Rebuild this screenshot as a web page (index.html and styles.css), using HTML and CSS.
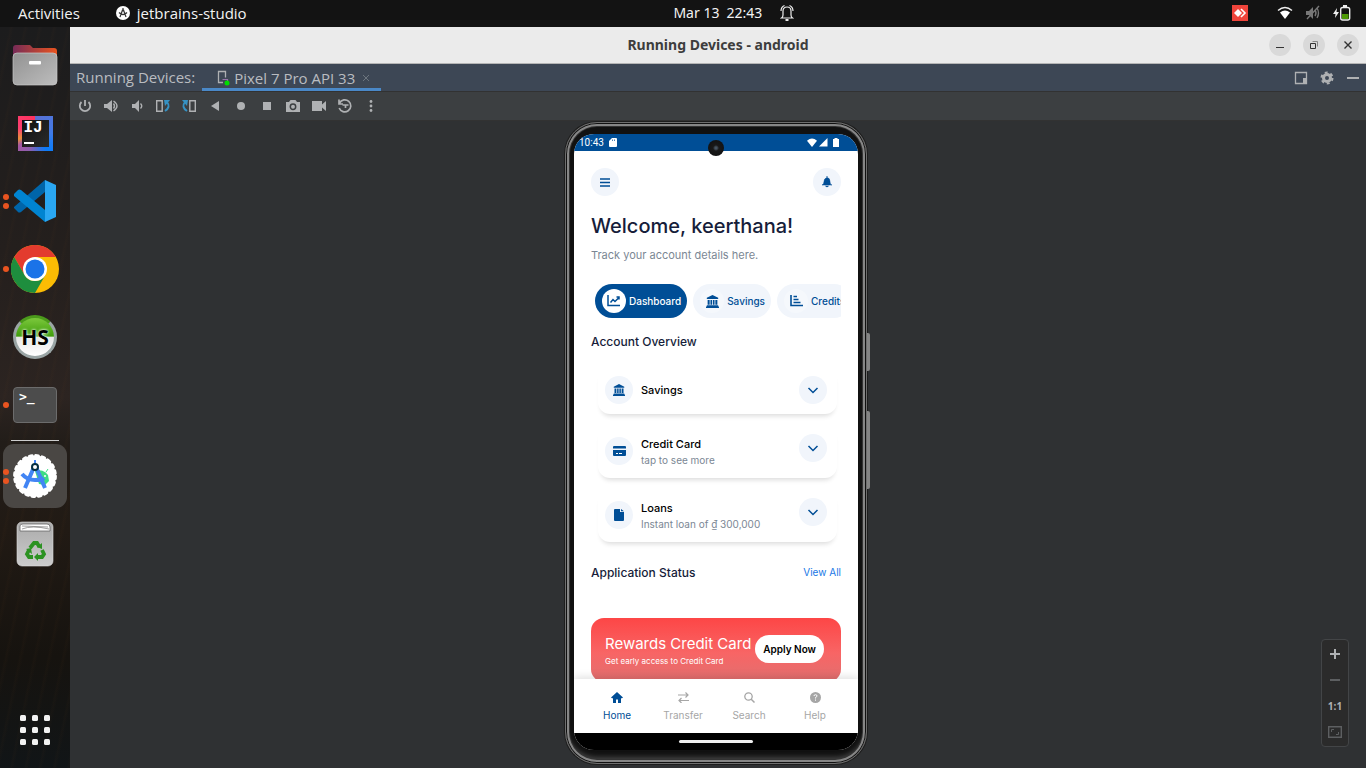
FILE: index.html
```html
<!DOCTYPE html>
<html lang="en">
<head>
<meta charset="utf-8">
<title>Running Devices - android</title>
<link rel="stylesheet" href="styles.css">
</head>
<body>
<svg class="defs" aria-hidden="true">
  <symbol id="studio" viewBox="0 0 44 44">
    <circle cx="22" cy="22" r="20.800" fill="#fff"/>
    <circle cx="22" cy="22" r="20.600" fill="none" stroke="#fff" stroke-width="2.600" stroke-linecap="round" stroke-dasharray="3 3.472"/>
    <path d="M22 17a10 9 0 0 1 13 4l1 6-4 4-6-1z" fill="#3ddc84"/>
    <circle cx="32" cy="22" r="1" fill="#fff"/><path d="M28 18l-2-2M33 18l2-3" stroke="#3ddc84"/>
    <path d="M21 13l-9 21M23 13l9 21" stroke="#4285f4" stroke-width="4"/>
    <path d="M9 20q5 6 13 6 7 0 9-2" fill="none" stroke="#4285f4" stroke-width="4"/>
    <path d="M22 6v5" stroke="#4285f4" stroke-width="2"/>
    <circle cx="22" cy="13" r="3" fill="#fff" stroke="#073042" stroke-width="2"/>
  </symbol>
  <symbol id="bank" viewBox="0 0 16 16"><path fill="currentColor" d="M8 0l7 3.500V5H1V3.500zM2 6h2.500v6H2zM5.500 6h2v6h-2zM8.500 6h2v6h-2zM11.500 6H14v6h-2.500zM1 12.500h14V14h1v2H0v-2h1z"/></symbol>
  <symbol id="chevron" viewBox="0 0 12 12"><path fill="none" stroke="currentColor" stroke-width="1.500" d="M1.500 4L6 8.500 10.500 4"/></symbol>
  <symbol id="wifi" viewBox="0 0 16 14"><path fill="currentColor" d="M8 14L0 4Q8-3 16 4z"/></symbol>
</svg>

<header class="topbar">
  <button class="top-item activities">Activities</button>
  <button class="top-item app-name">
    <svg width="14" height="14" viewBox="0 0 14 14" aria-hidden="true"><circle cx="7" cy="7" r="7" fill="#fff"/><path d="M7 2v2M6.500 4L4 11M7.500 4L10 11M3 6.500q4 4 8 0" fill="none" stroke="#333" stroke-width="1.200"/><circle cx="7" cy="4.500" r="1" fill="#333"/></svg>
    jetbrains-studio
  </button>
  <button class="top-item clock"><span>Mar 13</span><span>22:43</span>
    <svg width="14" height="18" viewBox="0 0 14 18" fill="none" stroke="#eee" stroke-width="1.200" aria-hidden="true"><path d="M1.500 14q1.500-1 1.500-3V7q0-4 4-4t4 4v4q0 2 1.500 3zM1 7q0-4 3.500-5.500M13 7q0-4-3.500-5.500"/><path d="M5.500 16h3" stroke-width="2"/></svg>
  </button>
  <div class="tray">
    <svg class="anydesk" width="16" height="16" viewBox="0 0 16 16" aria-hidden="true"><path fill="#ef443b" d="M0 0h16v16H0z"/><path fill="#fff" d="M2 8l4-4 4 4-4 4z"/><path d="M9 4l4 4-4 4" fill="none" stroke="#fff" stroke-width="1.600"/></svg>
    <svg class="net" width="16" height="14" viewBox="0 0 16 14" aria-hidden="true"><path d="M1 4.500Q8-1.500 15 4.500" fill="none" stroke="#eee" stroke-width="1.500"/><path d="M8 13L3 6.500q5-4 10 0z" fill="#fff"/></svg>
    <svg width="16" height="16" viewBox="0 0 16 16" aria-hidden="true"><path d="M1 6h3l4-4v12l-4-4H1z" fill="#777"/><path d="M10 5q2 3 0 6M12 3q3 5 0 10M2 14L14 1" fill="none" stroke="#777" stroke-width="1.400"/></svg>
    <svg class="battery" width="18" height="16" viewBox="0 0 18 16" aria-hidden="true"><path d="M4 3L0 9h2.500L2 13l4-6H3.500z" fill="#eee"/><rect x="7.700" y="2.500" width="9" height="12.500" rx="2" fill="none" stroke="#eee" stroke-width="1.400"/><path d="M10 0h4v2h-4z" fill="#eee"/><path d="M9 9h6.500v5H9z" fill="#4e9a06"/></svg>
  </div>
</header>

<div class="desktop">
  <nav class="dock" aria-label="Dock">
    <button class="slot" aria-label="Files">
      <svg width="46" height="42" viewBox="0 0 46 42"><defs><linearGradient id="fo"><stop stop-color="#762b57"/><stop offset="1" stop-color="#e95420"/></linearGradient><linearGradient id="fg" x2="1" y2="1"><stop stop-color="#929292"/><stop offset="1" stop-color="#bdbdbd"/></linearGradient></defs><path d="M1 16V4q0-3 3-3h14l3 3h21q3 0 3 3v9z" fill="url(#fo)"/><rect x="1" y="9" width="44" height="32" rx="4" fill="url(#fg)" stroke="#c8c8c8" stroke-width=".7"/><rect x="17" y="17" width="12" height="3.500" rx="1" fill="#fff"/></svg>
    </button>
    <button class="slot" aria-label="IntelliJ IDEA"><span class="idea"><span class="idea-face">IJ</span></span></button>
    <button class="slot two" aria-label="Visual Studio Code">
      <svg width="42" height="42" viewBox="0 0 42 42"><path d="M0 28l4 4q1 1 3 0L31 12V0L0 27z" fill="#0065a9"/><path d="M0 14l4-4q1-1 3 0l24 20v12L0 16z" fill="#0084d1"/><path d="M31 0l11 5v32l-11 5z" fill="#2aa7f2"/></svg>
    </button>
    <button class="slot one" aria-label="Chrome">
      <svg width="48" height="48" viewBox="0 0 48 48"><circle cx="24" cy="24" r="24" fill="#fbbc04"/><path d="M3.200 12A24 24 0 0 1 44.800 12H24L13.600 30z" fill="#e33b2e"/><path d="M3.200 12A24 24 0 0 0 24 48L34.400 30A12 12 0 0 1 13.600 30z" fill="#1e8e3e"/><circle cx="24" cy="24" r="12" fill="#fff"/><circle cx="24" cy="24" r="9.500" fill="#1a73e8"/></svg>
    </button>
    <button class="slot" aria-label="HeidiSQL"><span class="hs">HS</span></button>
    <button class="slot one" aria-label="Terminal"><span class="terminal">&gt;_</span></button>
    <hr class="dock-line">
    <button class="slot two active" aria-label="Android Studio"><svg width="44" height="44"><use href="#studio"/></svg></button>
    <button class="slot" aria-label="Trash">
      <svg width="38" height="46" viewBox="0 0 38 46"><defs><linearGradient id="tr" x2="0" y2="1"><stop stop-color="#aaa"/><stop offset="1" stop-color="#ccc"/></linearGradient></defs><rect x="1" y="1" width="36" height="44" rx="5" fill="url(#tr)" stroke="#ddd" stroke-width=".6"/><path d="M4 10V5q0-2 3-2h24q3 0 3 3v4z" fill="#fff" stroke="#666" stroke-width=".8"/><path d="M6 5l26 1M6 8q10-4 27 0" fill="none" stroke="#777" stroke-width=".7"/><g fill="none" stroke="#2c9222" stroke-width="3.800"><path d="M14 27l4-5h3l2.500 4"/><path d="M26 29l2 4-2 3h-5"/><path d="M17 36h-4l-2-3 2-4"/></g><path d="M26 22v6l-5-2zM22 32v8l-4-4zM10 28l5-1 1 6z" fill="#2c9222"/></svg>
    </button>
    <button class="slot apps" aria-label="Show Applications">
      <svg width="30" height="30" viewBox="0 0 30 30" fill="#f2f2f2"><rect width="6" height="6" rx="1.500"/><rect x="12" width="6" height="6" rx="1.500"/><rect x="24" width="6" height="6" rx="1.500"/><rect y="12" width="6" height="6" rx="1.500"/><rect x="12" y="12" width="6" height="6" rx="1.500"/><rect x="24" y="12" width="6" height="6" rx="1.500"/><rect y="24" width="6" height="6" rx="1.500"/><rect x="12" y="24" width="6" height="6" rx="1.500"/><rect x="24" y="24" width="6" height="6" rx="1.500"/></svg>
    </button>
  </nav>

  <main class="window">
    <div class="titlebar">
      <h1 class="window-title">Running Devices - android</h1>
      <div class="window-buttons">
        <button aria-label="Minimize"><svg width="10" height="10"><path d="M1 7.500h8" stroke="#333"/></svg></button>
        <button aria-label="Restore"><svg width="10" height="10" fill="none"><path d="M3.500 1.500h5v5" stroke="#888"/><path d="M1.500 3.500h5v5h-5z" stroke="#333"/></svg></button>
        <button aria-label="Close"><svg width="10" height="10"><path d="M1.500 1.500l7 7M8.500 1.500l-7 7" stroke="#333" stroke-width="1.400"/></svg></button>
      </div>
    </div>

    <div class="tabs">
      <span class="tabs-label">Running Devices:</span>
      <div class="tab">
        <svg width="14" height="16" viewBox="0 0 14 16" aria-hidden="true"><path d="M7 12.500H2.500v-11h7v6" fill="none" stroke="#afb1b3" stroke-width="1.300"/><path d="M6.500 9.500h5v3" fill="none" stroke="#9876aa" stroke-width="1.200"/><circle cx="11" cy="13" r="2.500" fill="#0d0"/></svg>
        <span>Pixel 7 Pro API 33</span>
        <button class="tab-close" aria-label="Close tab"><svg width="8" height="8"><path d="M1 1l6 6M7 1L1 7" stroke="#6c757e"/></svg></button>
      </div>
      <div class="tab-tools">
        <button aria-label="Window mode"><svg width="16" height="16"><path d="M2.500 2.500h11v11h-11z" fill="none" stroke="#afb1b3" stroke-width="1.300"/><path d="M10 8h4v6h-4z" fill="#afb1b3"/></svg></button>
        <button aria-label="Settings"><svg width="16" height="16"><circle cx="8" cy="8" r="3.500" fill="none" stroke="#afb1b3" stroke-width="3"/><circle cx="8" cy="8" r="5.500" fill="none" stroke="#afb1b3" stroke-width="2" stroke-dasharray="2.880 2.880"/></svg></button>
        <button aria-label="Hide"><svg width="16" height="16"><path d="M2 8h12" stroke="#afb1b3" stroke-width="2"/></svg></button>
      </div>
    </div>

    <div class="toolbar">
      <button aria-label="Power"><svg width="16" height="16"><path d="M4.500 4a5.200 5.200 0 1 0 7 0M8 2v6" fill="none" stroke="#afb1b3" stroke-width="1.800"/></svg></button>
      <button aria-label="Volume up"><svg width="16" height="16"><path d="M1 6h3l5-4v12l-5-4H1z" fill="#afb1b3"/><path d="M10.500 5.500q2 2.500 0 5M10.500 3q7 5 0 10" fill="none" stroke="#afb1b3" stroke-width="1.400"/></svg></button>
      <button aria-label="Volume down"><svg width="16" height="16"><path d="M3 6h3l4-4v12l-4-4H3z" fill="#afb1b3"/><path d="M11.500 5.500q2.500 2.500 0 5" fill="none" stroke="#afb1b3" stroke-width="1.400"/></svg></button>
      <button aria-label="Rotate left"><svg width="16" height="16"><path d="M1.700 2.700h5.500v10.500H1.700z" fill="none" stroke="#afb1b3" stroke-width="1.400"/><path d="M10 13q6-4 2-9" fill="none" stroke="#3592c4" stroke-width="2"/><path d="M9 2h6l-5 6z" fill="#3592c4"/></svg></button>
      <button aria-label="Rotate right"><svg width="16" height="16"><path d="M8.800 2.700h5.500v10.500H8.800z" fill="none" stroke="#afb1b3" stroke-width="1.400"/><path d="M6 13q-6-4-2-9" fill="none" stroke="#3592c4" stroke-width="2"/><path d="M7 2H1l5 6z" fill="#3592c4"/></svg></button>
      <button aria-label="Back"><svg width="16" height="16"><path d="M4 8l8-5v10z" fill="#afb1b3"/></svg></button>
      <button aria-label="Home"><svg width="16" height="16"><circle cx="8" cy="8" r="4" fill="#afb1b3"/></svg></button>
      <button aria-label="Overview"><svg width="16" height="16"><path d="M4 4h8v8H4z" fill="#afb1b3"/></svg></button>
      <button aria-label="Screenshot"><svg width="16" height="16"><path d="M1 4h3l1.500-2h5L12 4h3v10H1z" fill="#afb1b3"/><circle cx="8" cy="8.700" r="2.700" fill="#afb1b3" stroke="#3c3f41" stroke-width="1.500"/></svg></button>
      <button aria-label="Record"><svg width="16" height="16"><path d="M1 3h10v3.500L15 3v10l-4-3.500V13H1z" fill="#afb1b3"/></svg></button>
      <button aria-label="Snapshots"><svg width="16" height="16"><path d="M2.500 5a6 6 0 1 1-.3 5M2 1.500V6h4M5.500 7h6M8.500 7v3" fill="none" stroke="#afb1b3" stroke-width="1.700"/></svg></button>
      <button aria-label="More"><svg width="16" height="16" fill="#afb1b3"><circle cx="8" cy="3.500" r="1.400"/><circle cx="8" cy="8" r="1.400"/><circle cx="8" cy="12.500" r="1.400"/></svg></button>
    </div>

    <div class="stage">
      <div class="phone">
        <span class="side-key power"></span><span class="side-key volume"></span>
        <span class="camera"></span>
        <div class="screen">
          <div class="status">
            <span>10:43</span>
            <svg width="8" height="9" viewBox="0 0 8 9" aria-hidden="true"><path d="M3 0h4q1 0 1 1v7q0 1-1 1H1q-1 0-1-1V3z" fill="#fff"/><path d="M3.500 1.500V3M5.500 1.500V3" stroke="#004e96" stroke-width=".7"/></svg>
            <span class="status-right">
              <svg width="10" height="9"><use href="#wifi"/></svg>
              <svg width="9" height="9"><path d="M8.500 0v8.500H0z" fill="#fff"/></svg>
              <svg width="6" height="9"><path d="M0 1h1.500V0h3v1H6v8H0z" fill="#fff"/></svg>
            </span>
          </div>

          <div class="content">
            <div class="app-head">
              <button class="round" aria-label="Menu"><svg width="10" height="9"><path d="M0 1h10M0 4.500h10M0 8h10" stroke="currentColor" stroke-width="1.300"/></svg></button>
              <button class="round" aria-label="Notifications"><svg width="10" height="12"><path d="M5 0v1.500Q8 2 8 5.500T10 9H0Q2 8.500 2 5.500T5 1.500zM3.500 10h3q-1.500 2-3 0z" fill="currentColor" stroke="currentColor" stroke-width=".5"/></svg></button>
            </div>
            <h2 class="welcome">Welcome, keerthana!</h2>
            <p class="lead">Track your account details here.</p>

            <div class="chips">
              <button class="chip selected"><span class="chip-icon"><svg width="14" height="12"><path d="M1 0v10.500h12M3.500 7.500l2.500-3 2 2 4-4M9.500 2H12v2.500" fill="none" stroke="currentColor" stroke-width="1.500"/></svg></span>Dashboard</button>
              <button class="chip"><span class="chip-icon"><svg width="13" height="13"><use href="#bank"/></svg></span>Savings</button>
              <button class="chip"><span class="chip-icon"><svg width="13" height="12"><path d="M1 0v10.500h12M3.500 1.500h3.500M3.500 4.500h5M3.500 7.500h7" fill="none" stroke="currentColor" stroke-width="1.600"/></svg></span>Credits</button>
            </div>

            <h3 class="section">Account Overview</h3>
            <div class="cards">
              <article class="card">
                <span class="round"><svg width="12" height="12"><use href="#bank"/></svg></span>
                <div class="card-text"><h4>Savings</h4></div>
                <button class="round" aria-label="Expand Savings"><svg width="12" height="12"><use href="#chevron"/></svg></button>
              </article>
              <article class="card tall">
                <span class="round low"><svg width="13" height="10"><path d="M1 0h11q1 0 1 1v1.500H0V1q0-1 1-1zM0 4h13v5q0 1-1 1H1q-1 0-1-1z" fill="currentColor"/><path d="M3 7.500h2M6 7.500h3" stroke="#fff"/></svg></span>
                <div class="card-text"><h4>Credit Card</h4><p>tap to see more</p></div>
                <button class="round" aria-label="Expand Credit Card"><svg width="12" height="12"><use href="#chevron"/></svg></button>
              </article>
              <article class="card tall">
                <span class="round low"><svg width="10" height="12"><path d="M1 0h5v3h4v8q0 1-1 1H1q-1 0-1-1V1q0-1 1-1zM7 0l3 2.300H7z" fill="currentColor"/></svg></span>
                <div class="card-text"><h4>Loans</h4><p>Instant loan of ₫ 300,000</p></div>
                <button class="round" aria-label="Expand Loans"><svg width="12" height="12"><use href="#chevron"/></svg></button>
              </article>
            </div>

            <div class="row-head"><h3 class="section">Application Status</h3><a href="#">View All</a></div>
            <div class="banner">
              <div><h4>Rewards Credit Card</h4><p>Get early access to Credit Card</p></div>
              <button class="apply">Apply Now</button>
            </div>
          </div>

          <nav class="tabbar" aria-label="App">
            <a class="current" href="#"><svg width="12" height="11"><path d="M6 0l6 5.500-1 .8h-1V11H7V7.500H5V11H2V6.300H1l-1-.8z" fill="currentColor"/></svg>Home</a>
            <a href="#"><svg width="11" height="11"><path d="M0 3h10M7.500 .5L10 3 7.500 5.500M11 8.500H1M3.500 6L1 8.500 3.500 11" fill="none" stroke="currentColor" stroke-width="1.200"/></svg>Transfer</a>
            <a href="#"><svg width="11" height="11"><circle cx="4.500" cy="4.500" r="3.700" fill="none" stroke="currentColor" stroke-width="1.300"/><path d="M7 7l3.500 3.500" stroke="currentColor" stroke-width="1.500"/></svg>Search</a>
            <a href="#"><svg width="11" height="11"><circle cx="5.500" cy="5.500" r="5.500" fill="currentColor"/><path d="M4 4q0-1.300 1.500-1.300T7 4q0 .8-1.500 1.500v1M5.500 7.500v1.200" fill="none" stroke="#fff"/></svg>Help</a>
          </nav>
          <div class="gesture"><span></span></div>
        </div>
      </div>

      <div class="zoom">
        <button aria-label="Zoom in"><svg width="14" height="14"><path d="M2 7h10M7 2v10" stroke="#afb1b3" stroke-width="2"/></svg></button>
        <button aria-label="Zoom out"><svg width="14" height="14"><path d="M2 7h10" stroke="#5d5f61" stroke-width="2"/></svg></button>
        <button class="ratio">1:1</button>
        <button aria-label="Fit"><svg width="14" height="12" fill="none" stroke="#5d5f61"><path d="M.7.700h12.600v10.600H.7z" stroke-width="1.400"/><path d="M3.500 6V3.500H6M10.500 6v2.500H8"/></svg></button>
      </div>
    </div>
  </main>
</div>
</body>
</html>
```
FILE: styles.css
```css
* { box-sizing: border-box; margin: 0; padding: 0; }
body {
  display: flex; flex-direction: column; min-height: 100vh;
  background: #131313; color: #f2f2f2;
  font: 14px/20px "Noto Sans", "Open Sans", sans-serif;
}
button { border: 0; background: none; color: inherit; font: inherit; cursor: pointer; }
a { color: inherit; text-decoration: none; }
svg { display: block; flex: none; }
.defs { position: absolute; width: 0; height: 0; }

.topbar { display: grid; grid-template-columns: auto auto 1fr auto; align-items: center; height: 27px; padding: 0 15px 1px 18px; background: #131313; }
.top-item { display: flex; align-items: center; gap: 7px; }
.activities, .app-name { font-family: "Open Sans", sans-serif; font-size: 15px; }
.app-name { margin-left: 36px; }
.clock { justify-self: center; margin-right: 11px; }
.clock svg { margin-left: 11px; }
.tray { display: flex; align-items: center; gap: 12px; }
.anydesk { margin-right: 17px; }

.desktop { flex: 1; display: flex; }
.dock {
  flex: none; width: 70px; display: flex; flex-direction: column; align-items: center; gap: 4px; padding: 6px 0;
  background:
    repeating-linear-gradient(102deg, transparent 0 9px, rgba(110, 66, 28, .05) 11px, transparent 14px),
    linear-gradient(#1c1c1d, #241f1d 30%, #2c2421 50%, #221d19 56%, #211a14 68%, #16130f 85%, #111517);
}
.slot { position: relative; display: flex; align-items: center; justify-content: center; width: 64px; height: 64px; border-radius: 11px; }
.slot.active { background: #4a4744; }
.slot.one::before, .slot.two::before {
  content: ""; position: absolute; left: 0; top: 29px; width: 6px; height: 6px; border-radius: 50%; background: #e95420;
}
.slot.two::before { top: 25px; box-shadow: 0 9px #e95420; }
.dock-line { width: 48px; height: 1px; border: 0; margin: -1px 0 -1px; background: #ccc; }
.apps { margin-top: auto; }
.idea { display: flex; width: 35px; height: 35px; padding: 4px; background: conic-gradient(from 0deg, #5d6fd0, #3f7be8 25%, #087cfa 40%, #8a5fb0 55%, #a558a0 65%, #e8903a 70%, #fc3f70 80%, #fe315d); }
.idea-face { flex: 1; padding-left: 2px; background: linear-gradient(135deg, #111, #2b2b2b); color: #fff; font: bold 16px/17px "Liberation Mono", monospace; text-align: left; }
.idea-face::after { content: ""; display: block; width: 10px; height: 2px; margin-top: 5px; background: #fff; }
.hs { width: 44px; height: 44px; border: 3px solid #9aa5a5; border-top-color: #4b9a1b; border-radius: 50%; background: linear-gradient(#7cc83c, #3f9d0c 48%, #e6e6e6 50%, #fff); color: #000; font: bold 21px/38px "Open Sans", sans-serif; text-shadow: 0 0 3px #fff, 0 0 2px #dfd; }
.terminal { width: 44px; height: 36px; padding: 2px 5px; border: 1px solid #6c6c6c; border-radius: 4px; background: #4c4c4c; color: #fff; font: bold 13px/14px "DejaVu Sans Mono", monospace; text-align: left; }

.window { flex: 1; min-width: 0; display: flex; flex-direction: column; }
.titlebar { display: grid; grid-template-columns: 1fr auto 1fr; align-items: center; height: 37px; background: #ebebeb; border-bottom: 1px solid #b5b5b5; color: #3d3d3d; }
.window-title { grid-column: 2; font-size: 14px; }
.window-buttons { display: flex; justify-content: flex-end; gap: 12px; padding-right: 7px; }
.window-buttons button { display: grid; place-items: center; width: 22px; height: 22px; border-radius: 50%; background: #d9d9d9; }
.tabs { display: flex; align-items: stretch; height: 28px; padding-left: 6px; background: #3d4755; border-bottom: 1px solid #323232; color: #b9bcc0; font-family: "Open Sans", sans-serif; font-size: 15px; line-height: 27px; }
.tab { display: flex; align-items: center; gap: 4px; margin-left: 7px; padding: 3px 11px 0 14px; border-bottom: 3px solid #4a88c7; }
.tab span { line-height: 20px; }
.tab-close { margin-left: 3px; }
.tab-tools { display: flex; align-items: center; gap: 10px; margin-left: auto; padding-right: 5px; }
.toolbar { display: flex; align-items: center; gap: 10px; height: 29px; padding-left: 7px; background: #3c3f41; border-bottom: 1px solid #323232; }

.stage { position: relative; flex: 1; display: flex; justify-content: center; align-items: flex-start; padding: 1px 4px 3px 0; background: #2f3133; }
.phone {
  position: relative; width: 302px; padding: 11px 8px 13px; border: 1px solid #6f6f6f; border-radius: 32px;
  background: #111; box-shadow: inset 0 0 0 1px #111, inset 0 0 0 3px #868686, inset 0 0 0 4px #333, inset 0 -6px 5px #444, 0 0 0 1px #1e1e1e;
}
.side-key { position: absolute; right: -4px; width: 3px; border-radius: 0 2px 2px 0; background: #858585; }
.power { top: 210px; height: 38px; }
.volume { top: 288px; height: 78px; }
.camera { position: absolute; left: 50%; top: 17px; z-index: 2; width: 16px; height: 16px; margin-left: -8px; border-radius: 50%; background: radial-gradient(#465360 0 1px, #191919 3px, #0e0e0e); }
.screen { overflow: hidden; border-radius: 20px; background: #fff; color: #000; font: 11px/16px Inter, sans-serif; }
.status { display: flex; align-items: center; gap: 5px; height: 17px; padding: 0 19px 0 5px; background: #004e96; color: #fff; font: 10px/16px Roboto, sans-serif; }
.status-right { display: flex; gap: 2px; margin-left: auto; }
.status-right svg:last-child { margin-left: 3px; }
.content { height: 528px; overflow: hidden; padding: 17px 17px 0; }
.app-head { display: flex; justify-content: space-between; }
.round { display: grid; place-items: center; flex: none; width: 28px; height: 28px; border-radius: 50%; background: #f1f5fb; color: #004e96; }
.welcome { margin-top: 16px; color: #161d3a; font-size: 20px; line-height: 28px; font-weight: 500; white-space: nowrap; }
.lead { margin-top: 7px; color: #7b8794; }
.chips { display: flex; gap: 6px; margin-top: 21px; padding-left: 4px; overflow: hidden; }
.chip { display: flex; align-items: center; gap: 3px; flex: none; height: 34px; padding: 0 6px 0 7px; border-radius: 17px; background: #f1f5fb; color: #004e96; font-size: 10px; font-weight: 500; }
.chip-icon { display: grid; place-items: center; width: 24px; height: 24px; border-radius: 50%; background: #f5f8fc; }
.selected { background: #004e96; color: #fff; }
.selected .chip-icon { background: #fff; color: #004e96; }
.section { color: #161d3a; font-size: 12px; line-height: 16px; font-weight: 500; }
.chips + .section { margin-top: 16px; }
.cards { display: flex; flex-direction: column; gap: 11px; padding: 17px 4px 0 7px; }
.card { display: flex; align-items: flex-start; gap: 8px; padding: 9px 10px 10px 7px; border-radius: 12px; background: #fff; box-shadow: 0 5px 5px -3px rgba(0, 0, 0, .14); }
.card.tall { padding-bottom: 10px; }
.card-text { flex: 1; align-self: center; }
.card.tall .card-text { align-self: flex-start; padding-top: 2px; }
.card h4 { font-size: 11px; line-height: 16px; font-weight: 500; }
.card p { color: #7b8794; font-size: 10px; }
.low { margin: 3px 0 -3px; }
.row-head { display: flex; justify-content: space-between; margin-top: 23px; }
.row-head a { color: #1877e6; font-size: 10px; line-height: 14px; }
.banner { display: flex; justify-content: space-between; align-items: flex-start; height: 64px; margin-top: 37px; padding: 17px 17px 0 14px; border-radius: 13px; background: linear-gradient(#fd4646, #f86565 55%, #e07070); color: #fff; }
.banner h4 { font-size: 15px; line-height: 17px; font-weight: 400; white-space: nowrap; }
.banner p { margin-top: 1px; font-size: 8px; }
.apply { flex: none; height: 28px; padding: 0 8px; border-radius: 14px; background: #fff; color: #000; font-size: 10px; font-weight: 600; }
.tabbar { position: relative; display: grid; grid-template-columns: repeat(4, 1fr); height: 54px; padding: 13px 10px 0; background: #fff; box-shadow: 0 -2px 8px rgba(0, 0, 0, .12); color: #a6a6a6; font-size: 10px; line-height: 14px; }
.tabbar a { display: flex; flex-direction: column; align-items: center; gap: 5px; }
.tabbar .current { color: #004e96; }
.gesture { display: grid; place-items: center; height: 17px; background: #000; }
.gesture span { width: 74px; height: 3px; border-radius: 2px; background: #eee; }

.zoom { position: absolute; right: 17px; bottom: 21px; display: grid; grid-template-rows: repeat(4, 26px); place-items: center; width: 28px; padding: 1px 0; border: 1px solid #434547; border-radius: 4px; background: #2b2b2b; color: #afb1b3; }
.zoom button { display: grid; place-items: center; }
.zoom .ratio { font: bold 10px/12px "Open Sans", sans-serif; }
```
